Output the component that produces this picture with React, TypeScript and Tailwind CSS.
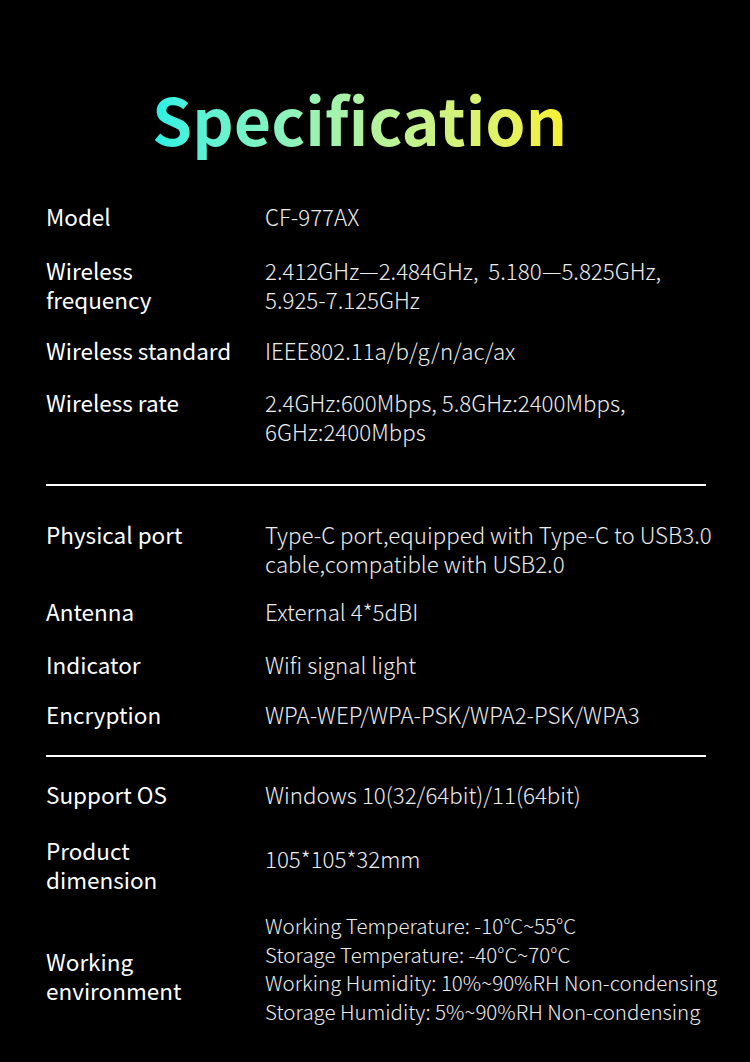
const font = { fontFamily: '"Noto Sans CJK SC", "Noto Sans", sans-serif' };

type Row = {
  label: string[];
  value: string[];
  mt: string;
  labelPt?: string;
  valuePt?: string;
};

function SpecRow({ label, value, mt, labelPt = "pt-0", valuePt = "pt-0" }: Row) {
  return (
    <div className={`flex items-start ${mt}`}>
      <div className={`w-[219px] shrink-0 text-[22.5px] leading-[29px] font-normal text-white ${labelPt}`}>
        {label.map((l) => (
          <div key={l}>{l}</div>
        ))}
      </div>
      <div className={`text-[22.3px] leading-[29px] font-light text-[#ececec] whitespace-pre ${valuePt}`}>
        {value.map((v) => (
          <div key={v}>{v}</div>
        ))}
      </div>
    </div>
  );
}

export default function App() {
  return (
    <div className="w-[750px] h-[1062px] bg-black overflow-hidden" style={font}>
      <div className="pt-[75px] pl-[152px]">
        <h1 className="text-[64.5px] leading-[86px] font-bold bg-gradient-to-r from-[#22f0e4] to-[#f8f02c] bg-clip-text text-transparent inline-block">
          Specification
        </h1>
      </div>

      <div className="px-[46px] mt-[41px]">
        <SpecRow mt="mt-0" label={["Model"]} value={["CF-977AX"]} />
        <SpecRow
          mt="mt-[25px]"
          label={["Wireless", "frequency"]}
          value={["2.412GHz\u20142.484GHz,  5.180\u20145.825GHz,", "5.925-7.125GHz"]}
        />
        <SpecRow mt="mt-[22px]" label={["Wireless standard"]} value={["IEEE802.11a/b/g/n/ac/ax"]} />
        <SpecRow
          mt="mt-[23px]"
          label={["Wireless rate"]}
          value={["2.4GHz:600Mbps, 5.8GHz:2400Mbps,", "6GHz:2400Mbps"]}
        />

        <div className="mt-[38px] h-[2px] w-[660px] bg-white" />

        <SpecRow
          mt="mt-[34px]"
          label={["Physical port"]}
          value={["Type-C port,equipped with Type-C to USB3.0", "cable,compatible with USB2.0"]}
        />
        <SpecRow mt="mt-[19px]" label={["Antenna"]} value={["External 4*5dBI"]} />
        <SpecRow mt="mt-[24px]" label={["Indicator"]} value={["Wifi signal light"]} />
        <SpecRow mt="mt-[21px]" label={["Encryption"]} value={["WPA-WEP/WPA-PSK/WPA2-PSK/WPA3"]} />

        <div className="mt-[26px] h-[2px] w-[660px] bg-white" />

        <SpecRow mt="mt-[23px]" label={["Support OS"]} value={["Windows 10(32/64bit)/11(64bit)"]} />
        <SpecRow
          mt="mt-[27px]"
          label={["Product", "dimension"]}
          value={["105*105*32mm"]}
          valuePt="pt-[8px]"
        />
        <div className="flex items-start mt-[17px]">
          <div className="w-[219px] shrink-0 pt-[36px] text-[22.5px] leading-[29px] font-normal text-white">
            <div>Working</div>
            <div>environment</div>
          </div>
          <div className="text-[20.5px] leading-[28.5px] font-light text-[#ececec] whitespace-nowrap">
            <div>Working Temperature: -10°C~55°C</div>
            <div>Storage Temperature: -40°C~70°C</div>
            <div>Working Humidity: 10%~90%RH Non-condensing</div>
            <div>Storage Humidity: 5%~90%RH Non-condensing</div>
          </div>
        </div>
      </div>
    </div>
  );
}
